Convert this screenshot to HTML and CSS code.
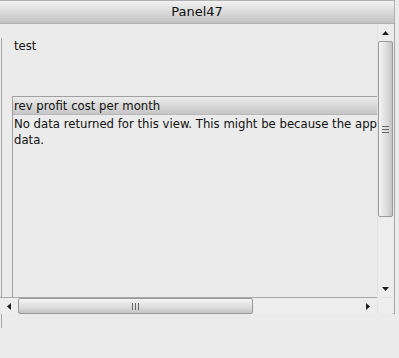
FILE: index.html
```html
<!DOCTYPE html>
<html>
<head>
<meta charset="utf-8">
<link rel="stylesheet" href="styles.css">
</head>
<body>
<div class="panel">
  <div class="panel-header">Panel47</div>
  <div class="panel-body">
    <div class="viewport">
      <div class="content">
        <div class="label">test</div>
        <div class="table">
          <div class="table-head">rev profit cost per month</div>
          <div class="table-msg">No data returned for this view. This might be because the applied filter excludes all data.</div>
        </div>
      </div>
    </div>
    <div class="vscroll">
      <div class="arrow up"><svg width="7" height="4" viewBox="0 0 7 4"><path d="M3.5 0 L7 4 L0 4 Z" fill="#202020"/></svg></div>
      <div class="vthumb"><span class="grip-h"></span></div>
      <div class="vtrack"></div>
      <div class="arrow down"><svg width="7" height="4" viewBox="0 0 7 4"><path d="M0 0 L7 0 L3.5 4 Z" fill="#202020"/></svg></div>
    </div>
    <div class="hscroll">
      <div class="harrow left"><svg width="4" height="7" viewBox="0 0 4 7"><path d="M0 3.5 L4 0 L4 7 Z" fill="#202020"/></svg></div>
      <div class="hthumb"><span class="grip-v"></span></div>
      <div class="htrack"></div>
      <div class="harrow right"><svg width="4" height="7" viewBox="0 0 4 7"><path d="M4 3.5 L0 0 L0 7 Z" fill="#202020"/></svg></div>
    </div>
    <div class="corner"></div>
  </div>
  <div class="tail"></div>
</div>
</body>
</html>
```
FILE: styles.css
```css
html, body {
  margin: 0;
  padding: 0;
  background: #ebebeb;
}
.panel {
  width: 395px;
}
.panel-header {
  box-sizing: border-box;
  height: 24px;
  border: 1px solid #b0b0b0;
  border-left: none;
  background: linear-gradient(#f2f2f2, #c3c3c3);
  font-family: "DejaVu Sans", sans-serif;
  font-size: 13px;
  color: #111;
  text-align: center;
  line-height: 22px;
}
.panel-body {
  display: grid;
  grid-template-columns: 377px 16px;
  grid-template-rows: 273px 17px;
  border-right: 1px solid #a8a8a8;
  border-bottom: 1px solid #a8a8a8;
  height: 290px;
  box-sizing: border-box;
}
.viewport {
  overflow: hidden;
  padding-left: 1px;
}
.content {
  margin-top: 14px;
  border-left: 1px solid #a8a8a8;
  height: 400px;
  font-family: "DejaVu Sans", sans-serif;
  font-size: 11.7px;
  color: #111;
}
.label {
  padding-left: 12px;
  padding-top: 1px;
  line-height: 14px;
}
.table {
  margin-left: 10px;
  margin-top: 43px;
  width: 700px;
  height: 300px;
  border-left: 1px solid #a0a0a0;
  border-top: 1px solid #a0a0a0;
}
.table-head {
  height: 17px;
  line-height: 18px;
  padding-left: 1px;
  background: linear-gradient(#ececec, #c6c6c6);
  border-bottom: 1px solid #b8b8b8;
}
.table-msg {
  padding-left: 1px;
  padding-top: 1px;
  line-height: 16px;
  width: 515px;
}
.vscroll {
  display: flex;
  flex-direction: column;
  background: #ededed;
  border-left: 1px solid #e2e2e2;
}
.arrow {
  height: 17px;
  display: flex;
  align-items: center;
  justify-content: center;
}
.vthumb {
  height: 176px;
  box-sizing: border-box;
  border: 1px solid #9a9a9a;
  border-radius: 2px;
  background: linear-gradient(90deg, #f4f4f4, #dcdcdc 60%, #c4c4c4);
  display: flex;
  align-items: center;
  justify-content: center;
}
.grip-h {
  width: 7px;
  height: 5px;
  border-top: 1px solid #666;
  border-bottom: 1px solid #666;
  background: linear-gradient(transparent 2px, #666 2px, #666 3px, transparent 3px);
}
.vtrack {
  flex: 1;
}
.hscroll {
  display: flex;
  background: #ededed;
  border-top: 1px solid #a8a8a8;
}
.harrow {
  width: 18px;
  display: flex;
  align-items: center;
  justify-content: center;
}
.hthumb {
  width: 235px;
  box-sizing: border-box;
  border: 1px solid #9a9a9a;
  border-radius: 2px;
  background: linear-gradient(#f4f4f4, #dcdcdc 60%, #c4c4c4);
  display: flex;
  align-items: center;
  justify-content: center;
}
.grip-v {
  width: 5px;
  height: 7px;
  border-left: 1px solid #666;
  border-right: 1px solid #666;
  background: linear-gradient(90deg, transparent 2px, #666 2px, #666 3px, transparent 3px);
}
.htrack {
  flex: 1;
}
.corner {
  background: #ededed;
  border-top: 1px solid #e2e2e2;
  border-left: 1px solid #e2e2e2;
}
.tail {
  height: 14px;
  margin-left: 1px;
  border-left: 1px solid #a8a8a8;
}
```
